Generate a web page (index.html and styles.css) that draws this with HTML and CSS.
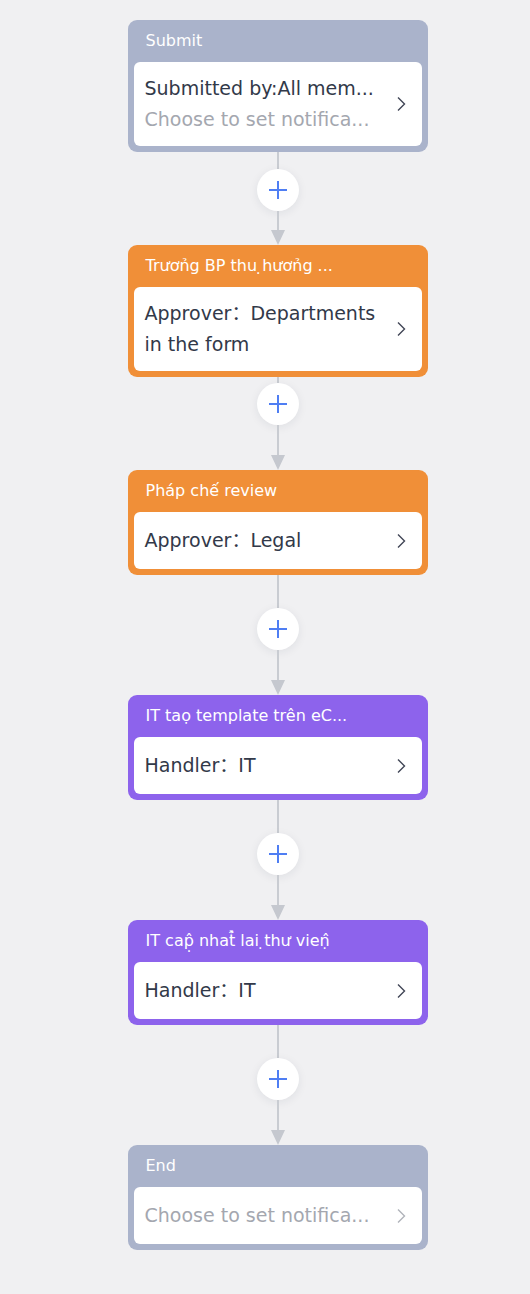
FILE: index.html
```html
<!DOCTYPE html>
<html lang="vi">
<head>
<meta charset="utf-8">
<title>Flow</title>
<link rel="stylesheet" href="styles.css">
</head>
<body>
<div class="flow">
  <div class="node node-grey">
    <div class="node-title">Submit</div>
    <div class="node-body">
      <div class="node-text">
        <div class="line-main">Submitted by:All mem...</div>
        <div class="line-muted">Choose to set notifica...</div>
      </div>
      <svg class="chev" viewBox="0 0 10 16" width="10" height="16"><path d="M2 1.5 L8.5 8 L2 14.5" fill="none" stroke="currentColor" stroke-width="1.4"/></svg>
    </div>
  </div>

  <div class="conn conn-a">
    <div class="seg seg-top"></div>
    <div class="plus"><svg viewBox="0 0 20 20" width="20" height="20"><path d="M10 1 V19 M1 10 H19" stroke="#4f7ef3" stroke-width="2"/></svg></div>
    <div class="seg seg-bot"></div>
    <div class="arrow"></div>
  </div>

  <div class="node node-orange">
    <div class="node-title">Trươn̉g BP thu ̣hươn̉g ...</div>
    <div class="node-body">
      <div class="node-text">
        <div class="line-main">Approver：Departments<br>in the form</div>
      </div>
      <svg class="chev" viewBox="0 0 10 16" width="10" height="16"><path d="M2 1.5 L8.5 8 L2 14.5" fill="none" stroke="currentColor" stroke-width="1.4"/></svg>
    </div>
  </div>

  <div class="conn conn-b">
    <div class="seg seg-top"></div>
    <div class="plus"><svg viewBox="0 0 20 20" width="20" height="20"><path d="M10 1 V19 M1 10 H19" stroke="#4f7ef3" stroke-width="2"/></svg></div>
    <div class="seg seg-bot"></div>
    <div class="arrow"></div>
  </div>

  <div class="node node-orange">
    <div class="node-title">Pháp chế review</div>
    <div class="node-body single">
      <div class="node-text">
        <div class="line-main">Approver：Legal</div>
      </div>
      <svg class="chev" viewBox="0 0 10 16" width="10" height="16"><path d="M2 1.5 L8.5 8 L2 14.5" fill="none" stroke="currentColor" stroke-width="1.4"/></svg>
    </div>
  </div>

  <div class="conn conn-c">
    <div class="seg seg-top"></div>
    <div class="plus"><svg viewBox="0 0 20 20" width="20" height="20"><path d="M10 1 V19 M1 10 H19" stroke="#4f7ef3" stroke-width="2"/></svg></div>
    <div class="seg seg-bot"></div>
    <div class="arrow"></div>
  </div>

  <div class="node node-purple">
    <div class="node-title">IT taọ template trên eC...</div>
    <div class="node-body single">
      <div class="node-text">
        <div class="line-main">Handler：IT</div>
      </div>
      <svg class="chev" viewBox="0 0 10 16" width="10" height="16"><path d="M2 1.5 L8.5 8 L2 14.5" fill="none" stroke="currentColor" stroke-width="1.4"/></svg>
    </div>
  </div>

  <div class="conn conn-c">
    <div class="seg seg-top"></div>
    <div class="plus"><svg viewBox="0 0 20 20" width="20" height="20"><path d="M10 1 V19 M1 10 H19" stroke="#4f7ef3" stroke-width="2"/></svg></div>
    <div class="seg seg-bot"></div>
    <div class="arrow"></div>
  </div>

  <div class="node node-purple">
    <div class="node-title">IT cap̣̂ nhat̂̉ lai ̣thư vieṇ̂</div>
    <div class="node-body single">
      <div class="node-text">
        <div class="line-main">Handler：IT</div>
      </div>
      <svg class="chev" viewBox="0 0 10 16" width="10" height="16"><path d="M2 1.5 L8.5 8 L2 14.5" fill="none" stroke="currentColor" stroke-width="1.4"/></svg>
    </div>
  </div>

  <div class="conn conn-c">
    <div class="seg seg-top"></div>
    <div class="plus"><svg viewBox="0 0 20 20" width="20" height="20"><path d="M10 1 V19 M1 10 H19" stroke="#4f7ef3" stroke-width="2"/></svg></div>
    <div class="seg seg-bot"></div>
    <div class="arrow"></div>
  </div>

  <div class="node node-grey">
    <div class="node-title">End</div>
    <div class="node-body single">
      <div class="node-text">
        <div class="line-muted">Choose to set notifica...</div>
      </div>
      <svg class="chev chev-muted" viewBox="0 0 10 16" width="10" height="16"><path d="M2 1.5 L8.5 8 L2 14.5" fill="none" stroke="currentColor" stroke-width="1.4"/></svg>
    </div>
  </div>
</div>
</body>
</html>
```

FILE: styles.css
```css
* { box-sizing: border-box; }

body {
  margin: 0;
  background: #f0f0f2;
  font-family: "DejaVu Sans", "Noto Sans CJK SC", sans-serif;
}

.flow {
  display: flex;
  flex-direction: column;
  align-items: center;
  padding: 20px 0 40px 25px;
}

.node {
  width: 300px;
  border-radius: 9px;
  padding: 0 6px 6px 6px;
}

.node-grey { background: #aab3cb; }
.node-orange { background: #f08f38; }
.node-purple { background: #8d63ec; }

.node-title {
  height: 42px;
  line-height: 42px;
  padding-left: 12px;
  color: #ffffff;
  font-size: 16px;
  white-space: nowrap;
  overflow: hidden;
}

.node-body {
  background: #ffffff;
  border-radius: 6px;
  display: flex;
  align-items: center;
  padding: 11px 16px 11px 11px;
  min-height: 57px;
}

.node-text {
  flex: 1;
  min-width: 0;
}

.line-main {
  color: #323949;
  font-size: 19px;
  line-height: 31px;
  white-space: nowrap;
}

.line-muted {
  color: #a4a7af;
  font-size: 19px;
  line-height: 31px;
  white-space: nowrap;
}

.chev {
  flex: none;
  color: #404656;
  margin-left: 6px;
}

.chev-muted { color: #b0b3ba; }

.conn {
  display: flex;
  flex-direction: column;
  align-items: center;
}

.seg {
  width: 2px;
  background: #c9ccd2;
}

.plus {
  width: 42px;
  height: 42px;
  border-radius: 50%;
  background: #ffffff;
  box-shadow: 0 2px 10px rgba(30, 40, 60, 0.08);
  display: flex;
  align-items: center;
  justify-content: center;
}

.arrow {
  width: 0;
  height: 0;
  border-left: 7.5px solid transparent;
  border-right: 7.5px solid transparent;
  border-top: 15px solid #c5c8cf;
}

.conn-a .seg-top { height: 17px; }
.conn-a .seg-bot { height: 19px; }
.conn-b .seg-top { height: 6px; }
.conn-b .seg-bot { height: 30px; }
.conn-c .seg-top { height: 33px; }
.conn-c .seg-bot { height: 30px; }
```
